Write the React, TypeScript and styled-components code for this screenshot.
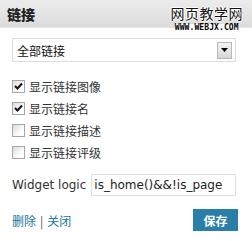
import React from "react";
import styled, { createGlobalStyle } from "styled-components";

const Global = createGlobalStyle`
  html, body { margin: 0; padding: 0; background: #ffffff; }
  body { font-family: "DejaVu Sans", "Noto Sans CJK SC", sans-serif; }
`;

const Panel = styled.div`
  position: relative;
  width: 252px;
  height: 241px;
  background: #ffffff;
  overflow: hidden;
`;

const Header = styled.div`
  position: relative;
  height: 27px;
  display: flex;
  align-items: center;
  padding-left: 7px;
  background: linear-gradient(#ececec, #dcdcdc);
  border-bottom: 1px solid #e6e6e6;
`;

const Title = styled.h3`
  margin: 0;
  font-family: "Noto Sans CJK SC", sans-serif;
  font-size: 14px;
  font-weight: 900;
  color: #222;
`;

const Arrow = styled.svg`
  position: absolute;
  right: 9px;
  top: 12px;
`;

const Watermark = styled.div`
  position: absolute;
  right: 9px;
  top: 6px;
  display: flex;
  flex-direction: column;
  align-items: center;
  gap: 3px;
`;

const WmCn = styled.span`
  font-family: "Noto Sans CJK SC", sans-serif;
  font-size: 14px;
  line-height: 15px;
  color: #111;
  letter-spacing: 0.5px;
  text-shadow: 1px 0 #fff, -1px 0 #fff, 0 1px #fff, 0 -1px #fff;
`;

const WmEn = styled.span`
  font-family: "DejaVu Sans Mono", monospace;
  font-weight: bold;
  font-size: 8px;
  line-height: 7px;
  color: #000;
  letter-spacing: 0.1px;
  background: #fff;
`;

const Body = styled.div`
  padding: 10px 16px 0 12px;
  display: flex;
  flex-direction: column;
`;

const Select = styled.div`
  height: 22px;
  border: 1px solid #dcdcdc;
  display: flex;
  align-items: center;
  justify-content: space-between;
  padding: 0 3px 0 4px;
  font-family: "Noto Sans CJK SC", sans-serif;
  font-size: 12px;
  color: #111;
`;

const DropButton = styled.div`
  width: 13px;
  height: 15px;
  border: 1px solid #b8b8b8;
  background: linear-gradient(#f4f4f4, #d6d6d6);
  display: flex;
  align-items: center;
  justify-content: center;
`;

const List = styled.div`
  margin-top: 13px;
  display: flex;
  flex-direction: column;
`;

const Row = styled.label`
  height: 22px;
  display: flex;
  align-items: center;
  gap: 4px;
  font-family: "Noto Sans CJK SC", sans-serif;
  font-size: 12px;
  color: #333;
`;

const Box = styled.span`
  width: 11px;
  height: 11px;
  border: 1px solid #a6a6a6;
  background: linear-gradient(135deg, #dcdcdc, #fff 70%);
  display: flex;
  align-items: center;
  justify-content: center;
`;

const Logic = styled.div`
  margin-top: 11px;
  display: flex;
  align-items: center;
  gap: 5px;
`;

const LogicLabel = styled.span`
  font-family: "DejaVu Sans", sans-serif;
  font-size: 12px;
  color: #333;
  white-space: nowrap;
`;

const LogicInput = styled.div`
  flex: 1;
  height: 20px;
  border: 1px solid #dfdfdf;
  padding: 0 2px;
  overflow: hidden;
  white-space: nowrap;
  display: flex;
  align-items: center;
  font-family: "DejaVu Sans", sans-serif;
  font-size: 12px;
  color: #222;
`;

const Footer = styled.div`
  margin-top: 13px;
  display: flex;
  align-items: center;
  justify-content: space-between;
`;

const Links = styled.div`
  font-family: "Noto Sans CJK SC", sans-serif;
  font-size: 12px;
  color: #21759b;
  display: flex;
  gap: 4px;
`;

const Sep = styled.span`
  color: #555;
`;

const SaveButton = styled.button`
  width: 45px;
  height: 22px;
  border: none;
  background: #2a7fa8;
  color: #fff;
  font-family: "Noto Sans CJK SC", sans-serif;
  font-weight: bold;
  font-size: 12px;
  padding: 0;
  margin-right: -2px;
`;

const Check = () => (
  <svg width="9" height="9" viewBox="0 0 9 9">
    <path d="M1 4 L3.5 6.5 L8 1.5" stroke="#111" strokeWidth="2" fill="none" />
  </svg>
);

const items = [
  { label: "显示链接图像", on: true },
  { label: "显示链接名", on: true },
  { label: "显示链接描述", on: false },
  { label: "显示链接评级", on: false },
];

export default function App() {
  return (
    <Panel>
      <Global />
      <Header>
        <Title>链接</Title>
        <Watermark>
          <WmCn>网页教学网</WmCn>
          <WmEn>WWW.WEBJX.COM</WmEn>
        </Watermark>
        <Arrow width="7" height="5" viewBox="0 0 7 5">
          <path d="M0 0 H7 L3.5 5 Z" fill="#a8a8a8" />
        </Arrow>
      </Header>
      <Body>
        <Select>
          <span>全部链接</span>
          <DropButton>
            <svg width="7" height="4" viewBox="0 0 7 4">
              <path d="M0 0 H7 L3.5 4 Z" fill="#000" />
            </svg>
          </DropButton>
        </Select>
        <List>
          {items.map((it) => (
            <Row key={it.label}>
              <Box>{it.on && <Check />}</Box>
              {it.label}
            </Row>
          ))}
        </List>
        <Logic>
          <LogicLabel>Widget logic</LogicLabel>
          <LogicInput>is_home()&amp;&amp;!is_page</LogicInput>
        </Logic>
        <Footer>
          <Links>
            <span>删除</span>
            <Sep>|</Sep>
            <span>关闭</span>
          </Links>
          <SaveButton>保存</SaveButton>
        </Footer>
      </Body>
    </Panel>
  );
}
